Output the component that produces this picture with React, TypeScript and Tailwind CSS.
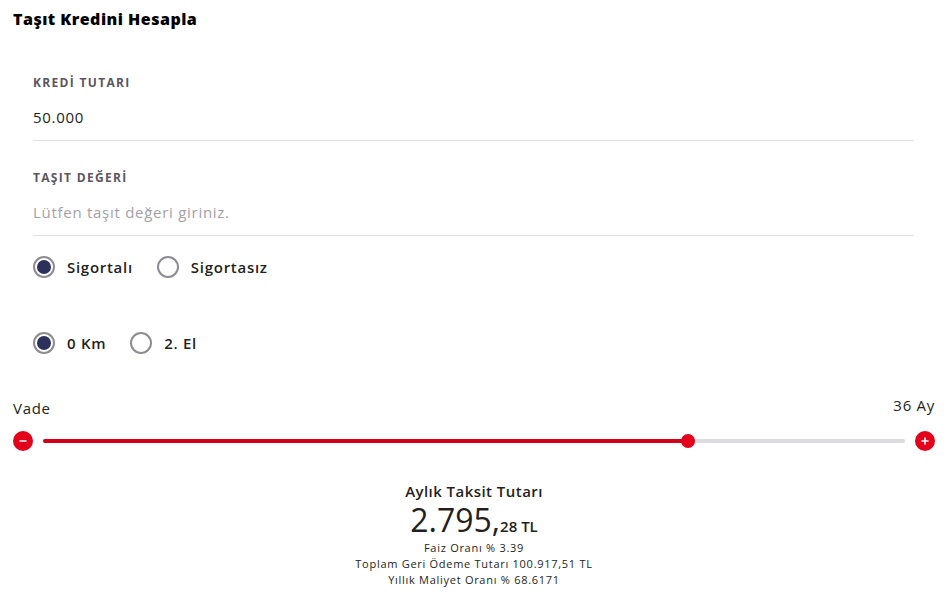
import React from "react";

const font = { fontFamily: "'Open Sans', Lato, sans-serif" };

function Field({ label, value, placeholder }: { label: string; value?: string; placeholder?: string }) {
  return (
    <div className="border-b border-[#e2e2e4] pb-[13px]">
      <div className="text-[12px] font-bold tracking-[0.11em] text-[#5b5660] leading-none">{label}</div>
      <div className={"mt-[18px] text-[15px] leading-[20px] " + (value ? "text-[#231f20]" : "text-[#a49fa8]")}>
        {value ?? placeholder}
      </div>
    </div>
  );
}

function Radio({ label, checked }: { label: string; checked?: boolean }) {
  return (
    <label className="flex items-center gap-[12px]">
      <span className="flex h-[22px] w-[22px] items-center justify-center rounded-full border-2 border-[#8e8c92] bg-white">
        {checked && <span className="h-[14px] w-[14px] rounded-full bg-[#2c305c]" />}
      </span>
      <span className="text-[15px] font-semibold text-[#231f20]">{label}</span>
    </label>
  );
}

function RoundBtn({ sign }: { sign: "-" | "+" }) {
  return (
    <span className="flex h-[20px] w-[20px] items-center justify-center rounded-full bg-[#e2001a]">
      <svg width="10" height="10" viewBox="0 0 10 10">
        <path d="M2 5h6" stroke="#fff" strokeWidth="1.6" strokeLinecap="round" />
        {sign === "+" && <path d="M5 2v6" stroke="#fff" strokeWidth="1.6" strokeLinecap="round" />}
      </svg>
    </span>
  );
}

export default function App() {
  const pct = 0.748;
  return (
    <div className="h-[593px] w-[948px] bg-white tracking-[0.045em] text-[#231f20]" style={font}>
      <div className="px-[13px] pt-[9px]">
        <h1 className="text-[16px] font-extrabold leading-[20px] tracking-[0.03em] text-black">Taşıt Kredini Hesapla</h1>
      </div>

      <div className="ml-[33px] mr-[34px] mt-[48px] flex flex-col gap-[31px]">
        <Field label="KREDİ TUTARI" value="50.000" />
        <Field label="TAŞIT DEĞERİ" placeholder="Lütfen taşıt değeri giriniz." />
      </div>

      <div className="ml-[33px] mt-[20px] flex items-center gap-[24px]">
        <Radio label="Sigortalı" checked />
        <Radio label="Sigortasız" />
      </div>

      <div className="ml-[33px] mt-[53px] flex items-center gap-[24px]">
        <Radio label="0 Km" checked />
        <Radio label="2. El" />
      </div>

      <div className="mx-[13px] mt-[41px]">
        <div className="flex items-end justify-between text-[15px] leading-[20px]">
          <span className="mt-[3px]">Vade</span>
          <span className="mb-[3px]">36 Ay</span>
        </div>
        <div className="mt-[13px] flex items-center gap-[10px]">
          <RoundBtn sign="-" />
          <div className="relative h-[4px] flex-1 rounded-full bg-[#dcdbde]">
            <div className="h-full rounded-full bg-[#d2001a]" style={{ width: `${pct * 100}%` }} />
            <span
              className="absolute top-1/2 h-[14px] w-[14px] -translate-x-1/2 -translate-y-1/2 rounded-full bg-[#e2001a]"
              style={{ left: `${pct * 100}%` }}
            />
          </div>
          <RoundBtn sign="+" />
        </div>
      </div>

      <div className="mt-[30px] flex flex-col items-center">
        <div className="text-[15px] font-semibold leading-[20px] tracking-[0.03em]">Aylık Taksit Tutarı</div>
        <div className="mt-[2px] flex items-baseline leading-[34px] tracking-normal">
          <span className="text-[32px] font-medium">2.795,</span>
          <span className="text-[15px] font-semibold">28 TL</span>
        </div>
        <div className="-mt-[3px] text-center text-[11px] leading-[16px]">
          <div>Faiz Oranı % 3.39</div>
          <div>Toplam Geri Ödeme Tutarı 100.917,51 TL</div>
          <div>Yıllık Maliyet Oranı % 68.6171</div>
        </div>
      </div>
    </div>
  );
}
